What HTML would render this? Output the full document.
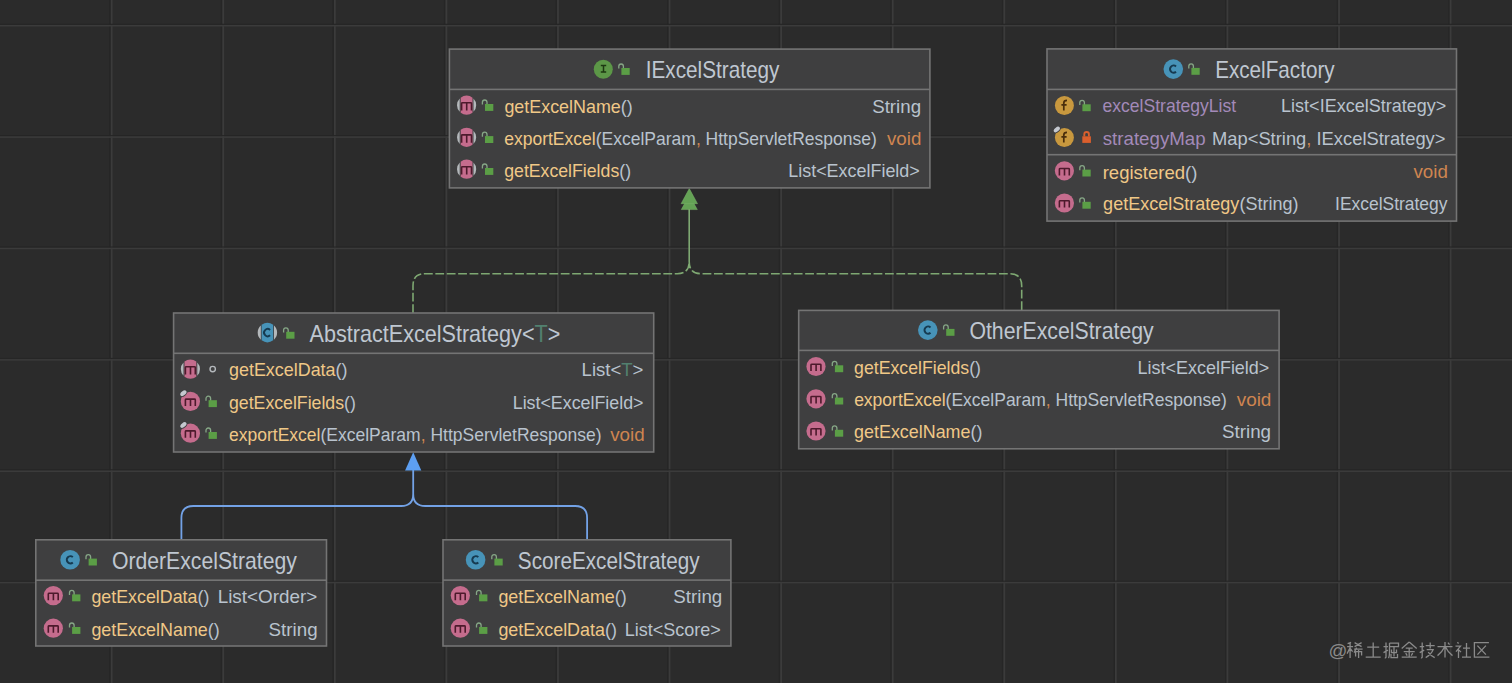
<!DOCTYPE html>
<html><head><meta charset="utf-8"><title>UML diagram</title>
<style>html,body{margin:0;padding:0;background:#2b2b2b;width:1512px;height:683px;overflow:hidden}</style>
</head><body>
<svg width="1512" height="683" viewBox="0 0 1512 683" style="display:block;font-family:'Liberation Sans', sans-serif">
<rect width="1512" height="683" fill="#2b2b2b"/>
<rect x="109.25" y="0" width="1.5" height="683" fill="#262626"/>
<rect x="110.75" y="0" width="1.8" height="683" fill="#3b3b3b"/>
<rect x="220.83" y="0" width="1.5" height="683" fill="#262626"/>
<rect x="222.33" y="0" width="1.8" height="683" fill="#3b3b3b"/>
<rect x="332.41" y="0" width="1.5" height="683" fill="#262626"/>
<rect x="333.91" y="0" width="1.8" height="683" fill="#3b3b3b"/>
<rect x="443.99" y="0" width="1.5" height="683" fill="#262626"/>
<rect x="445.49" y="0" width="1.8" height="683" fill="#3b3b3b"/>
<rect x="555.57" y="0" width="1.5" height="683" fill="#262626"/>
<rect x="557.07" y="0" width="1.8" height="683" fill="#3b3b3b"/>
<rect x="667.15" y="0" width="1.5" height="683" fill="#262626"/>
<rect x="668.65" y="0" width="1.8" height="683" fill="#3b3b3b"/>
<rect x="778.73" y="0" width="1.5" height="683" fill="#262626"/>
<rect x="780.23" y="0" width="1.8" height="683" fill="#3b3b3b"/>
<rect x="890.31" y="0" width="1.5" height="683" fill="#262626"/>
<rect x="891.81" y="0" width="1.8" height="683" fill="#3b3b3b"/>
<rect x="1001.89" y="0" width="1.5" height="683" fill="#262626"/>
<rect x="1003.39" y="0" width="1.8" height="683" fill="#3b3b3b"/>
<rect x="1113.47" y="0" width="1.5" height="683" fill="#262626"/>
<rect x="1114.97" y="0" width="1.8" height="683" fill="#3b3b3b"/>
<rect x="1225.05" y="0" width="1.5" height="683" fill="#262626"/>
<rect x="1226.55" y="0" width="1.8" height="683" fill="#3b3b3b"/>
<rect x="1336.63" y="0" width="1.5" height="683" fill="#262626"/>
<rect x="1338.13" y="0" width="1.8" height="683" fill="#3b3b3b"/>
<rect x="1448.21" y="0" width="1.5" height="683" fill="#262626"/>
<rect x="1449.71" y="0" width="1.8" height="683" fill="#3b3b3b"/>
<rect x="0" y="23.73" width="1512" height="1.2" fill="#262626"/>
<rect x="0" y="24.98" width="1512" height="1.5" fill="#3b3b3b"/>
<rect x="0" y="135.11" width="1512" height="1.2" fill="#262626"/>
<rect x="0" y="136.36" width="1512" height="1.5" fill="#3b3b3b"/>
<rect x="0" y="246.49" width="1512" height="1.2" fill="#262626"/>
<rect x="0" y="247.74" width="1512" height="1.5" fill="#3b3b3b"/>
<rect x="0" y="357.87" width="1512" height="1.2" fill="#262626"/>
<rect x="0" y="359.12" width="1512" height="1.5" fill="#3b3b3b"/>
<rect x="0" y="469.25" width="1512" height="1.2" fill="#262626"/>
<rect x="0" y="470.5" width="1512" height="1.5" fill="#3b3b3b"/>
<rect x="0" y="580.63" width="1512" height="1.2" fill="#262626"/>
<rect x="0" y="581.88" width="1512" height="1.5" fill="#3b3b3b"/>
<path d="M413 313 V285.7 Q413 273.7 425 273.7 H677.2 Q689.2 273.7 689.2 261.7 V205 M1021.7 310 V285.7 Q1021.7 273.7 1009.7 273.7 H701.2 Q689.2 273.7 689.2 261.7 V205" stroke="#7ea872" stroke-width="1.6" fill="none" stroke-dasharray="8.8 2.6"/>
<path d="M689.3 195.2 L697.3 209.6 L681.3 209.6 Z" fill="#64a255" stroke="#7db56d" stroke-width="0.5"/>
<path d="M689.3 188.6 L697.5 203.7 L681.1 203.7 Z" fill="#64a255" stroke="#7db56d" stroke-width="0.5"/>
<path d="M181.4 540 V518 Q181.4 506 193.4 506 H401.2 Q413.2 506 413.2 494 V470 M587.1 540 V518 Q587.1 506 575.1 506 H425.2 Q413.2 506 413.2 494" stroke="#73a2e6" stroke-width="1.8" fill="none"/>
<path d="M413.2 452.3 L421.3 470.6 L405.1 470.6 Z" fill="#5d9ff2"/>
<rect x="449.4" y="49.1" width="480.5" height="138.8" fill="#3f3f40" stroke="#747474" stroke-width="1.6"/><rect x="449.4" y="88.6" width="480.5" height="1.6" fill="#747474"/>
<circle cx="603.3" cy="69.2" r="9.5" fill="#5c9747"/><path d="M600.8 65.6 H606.2 M603.5 65.6 V72 M600.8 72 H606.2" stroke="#1d3812" stroke-width="1.5" fill="none"/>
<path d="M618.8 68.6 V66.3 A2.3 2.3 0 0 1 623.4 66.3 V68.6" stroke="#86a786" stroke-width="1.3" fill="none"/><rect x="621.4" y="68" width="8.3" height="6.9" fill="#5b9e46"/>
<text x="645.78" y="78.2" font-size="23.8" text-anchor="start" textLength="133.6" lengthAdjust="spacingAndGlyphs"><tspan fill="#bfc7d1">IExcelStrategy</tspan></text>
<path d="M459.7 98.53 A9.6 9.6 0 0 0 459.7 111.87 Z M473.5 98.53 A9.6 9.6 0 0 1 473.5 111.87 Z" fill="#b4b8bb"/><path d="M460.7 97.63 A9.6 9.6 0 0 1 472.5 97.63 V112.77 A9.6 9.6 0 0 1 460.7 112.77 Z" fill="#c56c8d"/><path d="M461.6 110.6 V103.4 Q461.6 102.8 462.5 102.8 H470.6 Q471.5 102.8 471.5 103.4 V110.6 M466.7 102.8 V110.6" stroke="#4d1a2c" stroke-width="1.6" fill="none"/>
<path d="M482.4 104.6 V102.3 A2.3 2.3 0 0 1 487 102.3 V104.6" stroke="#86a786" stroke-width="1.3" fill="none"/><rect x="485" y="104" width="8.3" height="6.9" fill="#5b9e46"/>
<path d="M459.7 130.63 A9.6 9.6 0 0 0 459.7 143.97 Z M473.5 130.63 A9.6 9.6 0 0 1 473.5 143.97 Z" fill="#b4b8bb"/><path d="M460.7 129.73 A9.6 9.6 0 0 1 472.5 129.73 V144.87 A9.6 9.6 0 0 1 460.7 144.87 Z" fill="#c56c8d"/><path d="M461.6 142.7 V135.5 Q461.6 134.9 462.5 134.9 H470.6 Q471.5 134.9 471.5 135.5 V142.7 M466.7 134.9 V142.7" stroke="#4d1a2c" stroke-width="1.6" fill="none"/>
<path d="M482.4 136.7 V134.4 A2.3 2.3 0 0 1 487 134.4 V136.7" stroke="#86a786" stroke-width="1.3" fill="none"/><rect x="485" y="136.1" width="8.3" height="6.9" fill="#5b9e46"/>
<path d="M459.7 162.53 A9.6 9.6 0 0 0 459.7 175.87 Z M473.5 162.53 A9.6 9.6 0 0 1 473.5 175.87 Z" fill="#b4b8bb"/><path d="M460.7 161.63 A9.6 9.6 0 0 1 472.5 161.63 V176.77 A9.6 9.6 0 0 1 460.7 176.77 Z" fill="#c56c8d"/><path d="M461.6 174.6 V167.4 Q461.6 166.8 462.5 166.8 H470.6 Q471.5 166.8 471.5 167.4 V174.6 M466.7 166.8 V174.6" stroke="#4d1a2c" stroke-width="1.6" fill="none"/>
<path d="M482.4 168.6 V166.3 A2.3 2.3 0 0 1 487 166.3 V168.6" stroke="#86a786" stroke-width="1.3" fill="none"/><rect x="485" y="168" width="8.3" height="6.9" fill="#5b9e46"/>
<text x="504.41" y="112.6" font-size="18.2" text-anchor="start" textLength="128.3" lengthAdjust="spacingAndGlyphs"><tspan fill="#f0c887">getExcelName</tspan><tspan fill="#b9c3ce">(</tspan><tspan fill="#b9c3ce">)</tspan></text>
<text x="872.18" y="112.6" font-size="18.2" text-anchor="start" textLength="48.9" lengthAdjust="spacingAndGlyphs"><tspan fill="#b9c3ce">String</tspan></text>
<text x="504.23" y="145.1" font-size="18.2" text-anchor="start" textLength="372.6" lengthAdjust="spacingAndGlyphs"><tspan fill="#f0c887">exportExcel</tspan><tspan fill="#b9c3ce">(</tspan><tspan fill="#b9c3ce">ExcelParam</tspan><tspan fill="#cf8550">, </tspan><tspan fill="#b9c3ce">HttpServletResponse</tspan><tspan fill="#b9c3ce">)</tspan></text>
<text x="887" y="145.1" font-size="18.2" text-anchor="start" textLength="34.4" lengthAdjust="spacingAndGlyphs"><tspan fill="#cf8550">void</tspan></text>
<text x="504.22" y="177.1" font-size="18.2" text-anchor="start" textLength="126.8" lengthAdjust="spacingAndGlyphs"><tspan fill="#f0c887">getExcelFields</tspan><tspan fill="#b9c3ce">(</tspan><tspan fill="#b9c3ce">)</tspan></text>
<text x="788.22" y="177.1" font-size="18.2" text-anchor="start" textLength="131.6" lengthAdjust="spacingAndGlyphs"><tspan fill="#b9c3ce">List&lt;ExcelField&gt;</tspan></text>
<rect x="1047" y="48.9" width="409.5" height="172.2" fill="#3f3f40" stroke="#747474" stroke-width="1.6"/><rect x="1047" y="88.6" width="409.5" height="1.6" fill="#747474"/><rect x="1047" y="153.9" width="409.5" height="1.6" fill="#747474"/>
<circle cx="1173.3" cy="69.1" r="9.8" fill="#4793b8"/><path d="M1176.01 66.42 A3.6 3.6 0 1 0 1176.01 71.78" stroke="#163a50" stroke-width="2.0" fill="none"/>
<path d="M1188.8 68.5 V66.2 A2.3 2.3 0 0 1 1193.4 66.2 V68.5" stroke="#86a786" stroke-width="1.3" fill="none"/><rect x="1191.4" y="67.9" width="8.3" height="6.9" fill="#5b9e46"/>
<text x="1215.15" y="78.2" font-size="23.8" text-anchor="start" textLength="119.5" lengthAdjust="spacingAndGlyphs"><tspan fill="#bfc7d1">ExcelFactory</tspan></text>
<circle cx="1064.4" cy="105.5" r="9.5" fill="#c8983e"/><path d="M1063.8 110.5 V102.9 Q1063.8 100.3 1067 100.3 M1061.4 104.8 H1066.6" stroke="#4a2e0c" stroke-width="1.7" fill="none"/>
<path d="M1079.8 104.9 V102.6 A2.3 2.3 0 0 1 1084.4 102.6 V104.9" stroke="#86a786" stroke-width="1.3" fill="none"/><rect x="1082.4" y="104.3" width="8.3" height="6.9" fill="#5b9e46"/>
<text x="1102.53" y="112.2" font-size="18.2" text-anchor="start" textLength="133.6" lengthAdjust="spacingAndGlyphs"><tspan fill="#a38ab9">excelStrategyList</tspan></text>
<text x="1281.12" y="112.2" font-size="18.2" text-anchor="start" textLength="165.1" lengthAdjust="spacingAndGlyphs"><tspan fill="#b9c3ce">List&lt;IExcelStrategy&gt;</tspan></text>
<circle cx="1064.4" cy="137.5" r="9.5" fill="#c8983e"/><path d="M1063.8 142.5 V134.9 Q1063.8 132.3 1067 132.3 M1061.4 136.8 H1066.6" stroke="#4a2e0c" stroke-width="1.7" fill="none"/><ellipse cx="1056.8" cy="129.5" rx="4.4" ry="2.9" transform="rotate(-40 1056.8 129.5)" fill="#3f3f40"/><ellipse cx="1056.8" cy="129.5" rx="3.6" ry="2.1" transform="rotate(-40 1056.8 129.5)" fill="#c4c8cf"/>
<path d="M1084.3 136.5 V134.3 A2.3 2.3 0 0 1 1088.9 134.3 V136.5" stroke="#db5f2d" stroke-width="1.9" fill="none"/><rect x="1082.3" y="136.3" width="8.6" height="6.6" fill="#db5f2d"/>
<text x="1102.79" y="144.5" font-size="18.2" text-anchor="start" textLength="102.8" lengthAdjust="spacingAndGlyphs"><tspan fill="#a38ab9">strategyMap</tspan></text>
<text x="1211.99" y="144.5" font-size="18.2" text-anchor="start" textLength="233.5" lengthAdjust="spacingAndGlyphs"><tspan fill="#b9c3ce">Map&lt;String</tspan><tspan fill="#cf8550">, </tspan><tspan fill="#b9c3ce">IExcelStrategy&gt;</tspan></text>
<circle cx="1064.4" cy="170.8" r="9.6" fill="#c56c8d"/><path d="M1059.4 175.4 V169.1 Q1059.4 168.5 1060.3 168.5 H1068.4 Q1069.3 168.5 1069.3 169.1 V175.4 M1064.5 168.5 V175.4" stroke="#4d1a2c" stroke-width="1.6" fill="none"/>
<path d="M1079.8 170.2 V167.9 A2.3 2.3 0 0 1 1084.4 167.9 V170.2" stroke="#86a786" stroke-width="1.3" fill="none"/><rect x="1082.4" y="169.6" width="8.3" height="6.9" fill="#5b9e46"/>
<text x="1102.68" y="178.6" font-size="18.2" text-anchor="start" textLength="94.7" lengthAdjust="spacingAndGlyphs"><tspan fill="#f0c887">registered</tspan><tspan fill="#b9c3ce">(</tspan><tspan fill="#b9c3ce">)</tspan></text>
<text x="1413.5" y="178.4" font-size="18.2" text-anchor="start" textLength="34.4" lengthAdjust="spacingAndGlyphs"><tspan fill="#cf8550">void</tspan></text>
<circle cx="1064.4" cy="203" r="9.6" fill="#c56c8d"/><path d="M1059.4 207.6 V201.3 Q1059.4 200.7 1060.3 200.7 H1068.4 Q1069.3 200.7 1069.3 201.3 V207.6 M1064.5 200.7 V207.6" stroke="#4d1a2c" stroke-width="1.6" fill="none"/>
<path d="M1079.8 202.4 V200.1 A2.3 2.3 0 0 1 1084.4 200.1 V202.4" stroke="#86a786" stroke-width="1.3" fill="none"/><rect x="1082.4" y="201.8" width="8.3" height="6.9" fill="#5b9e46"/>
<text x="1103.11" y="210.4" font-size="18.2" text-anchor="start" textLength="195.4" lengthAdjust="spacingAndGlyphs"><tspan fill="#f0c887">getExcelStrategy</tspan><tspan fill="#b9c3ce">(</tspan><tspan fill="#b9c3ce">String</tspan><tspan fill="#b9c3ce">)</tspan></text>
<text x="1335.07" y="210.4" font-size="18.2" text-anchor="start" textLength="112.4" lengthAdjust="spacingAndGlyphs"><tspan fill="#b9c3ce">IExcelStrategy</tspan></text>
<rect x="173.6" y="313" width="480.1" height="139" fill="#3f3f40" stroke="#747474" stroke-width="1.6"/><rect x="173.6" y="352.5" width="480.1" height="1.6" fill="#747474"/>
<path d="M260.8 325.49 A9.7 9.7 0 0 0 260.8 339.71 Z M274 325.49 A9.7 9.7 0 0 1 274 339.71 Z" fill="#b4b8bb"/><path d="M261.6 324.83 A9.7 9.7 0 0 1 273.2 324.83 V340.37 A9.7 9.7 0 0 1 261.6 340.37 Z" fill="#4793b8"/><path d="M270.11 329.92 A3.6 3.6 0 1 0 270.11 335.28" stroke="#163a50" stroke-width="1.9" fill="none"/>
<path d="M283.6 332.4 V330.1 A2.3 2.3 0 0 1 288.2 330.1 V332.4" stroke="#86a786" stroke-width="1.3" fill="none"/><rect x="286.2" y="331.8" width="8.3" height="6.9" fill="#5b9e46"/>
<text x="309.61" y="341.8" font-size="23.8" text-anchor="start" textLength="250.7" lengthAdjust="spacingAndGlyphs"><tspan fill="#bfc7d1">AbstractExcelStrategy&lt;</tspan><tspan fill="#52806f">T</tspan><tspan fill="#bfc7d1">&gt;</tspan></text>
<path d="M183.5 362.43 A9.6 9.6 0 0 0 183.5 375.77 Z M197.3 362.43 A9.6 9.6 0 0 1 197.3 375.77 Z" fill="#b4b8bb"/><path d="M184.5 361.53 A9.6 9.6 0 0 1 196.3 361.53 V376.67 A9.6 9.6 0 0 1 184.5 376.67 Z" fill="#c56c8d"/><path d="M185.4 374.5 V367.3 Q185.4 366.7 186.3 366.7 H194.4 Q195.3 366.7 195.3 367.3 V374.5 M190.5 366.7 V374.5" stroke="#4d1a2c" stroke-width="1.6" fill="none"/>
<circle cx="212.7" cy="369.1" r="2.7" stroke="#b4b8bc" stroke-width="1.4" fill="none"/>
<text x="229.01" y="376.2" font-size="18.2" text-anchor="start" textLength="118.5" lengthAdjust="spacingAndGlyphs"><tspan fill="#f0c887">getExcelData</tspan><tspan fill="#b9c3ce">(</tspan><tspan fill="#b9c3ce">)</tspan></text>
<text x="581.57" y="376.2" font-size="18.2" text-anchor="start" textLength="61.9" lengthAdjust="spacingAndGlyphs"><tspan fill="#b9c3ce">List&lt;</tspan><tspan fill="#52806f">T</tspan><tspan fill="#b9c3ce">&gt;</tspan></text>
<circle cx="190.4" cy="401.4" r="9.6" fill="#c56c8d"/><path d="M185.4 406 V399.7 Q185.4 399.1 186.3 399.1 H194.4 Q195.3 399.1 195.3 399.7 V406 M190.5 399.1 V406" stroke="#4d1a2c" stroke-width="1.6" fill="none"/><ellipse cx="183.4" cy="393.2" rx="4.4" ry="2.9" transform="rotate(-40 183.4 393.2)" fill="#3f3f40"/><ellipse cx="183.4" cy="393.2" rx="3.6" ry="2.1" transform="rotate(-40 183.4 393.2)" fill="#c4c8cf"/>
<path d="M206 400.8 V398.5 A2.3 2.3 0 0 1 210.6 398.5 V400.8" stroke="#86a786" stroke-width="1.3" fill="none"/><rect x="208.6" y="400.2" width="8.3" height="6.9" fill="#5b9e46"/>
<text x="229.02" y="408.9" font-size="18.2" text-anchor="start" textLength="126.8" lengthAdjust="spacingAndGlyphs"><tspan fill="#f0c887">getExcelFields</tspan><tspan fill="#b9c3ce">(</tspan><tspan fill="#b9c3ce">)</tspan></text>
<text x="512.73" y="408.9" font-size="18.2" text-anchor="start" textLength="130.8" lengthAdjust="spacingAndGlyphs"><tspan fill="#b9c3ce">List&lt;ExcelField&gt;</tspan></text>
<circle cx="190.4" cy="433.2" r="9.6" fill="#c56c8d"/><path d="M185.4 437.8 V431.5 Q185.4 430.9 186.3 430.9 H194.4 Q195.3 430.9 195.3 431.5 V437.8 M190.5 430.9 V437.8" stroke="#4d1a2c" stroke-width="1.6" fill="none"/><ellipse cx="183.4" cy="425" rx="4.4" ry="2.9" transform="rotate(-40 183.4 425)" fill="#3f3f40"/><ellipse cx="183.4" cy="425" rx="3.6" ry="2.1" transform="rotate(-40 183.4 425)" fill="#c4c8cf"/>
<path d="M206 432.6 V430.3 A2.3 2.3 0 0 1 210.6 430.3 V432.6" stroke="#86a786" stroke-width="1.3" fill="none"/><rect x="208.6" y="432" width="8.3" height="6.9" fill="#5b9e46"/>
<text x="229.03" y="441" font-size="18.2" text-anchor="start" textLength="372.6" lengthAdjust="spacingAndGlyphs"><tspan fill="#f0c887">exportExcel</tspan><tspan fill="#b9c3ce">(</tspan><tspan fill="#b9c3ce">ExcelParam</tspan><tspan fill="#cf8550">, </tspan><tspan fill="#b9c3ce">HttpServletResponse</tspan><tspan fill="#b9c3ce">)</tspan></text>
<text x="610.2" y="441" font-size="18.2" text-anchor="start" textLength="34.5" lengthAdjust="spacingAndGlyphs"><tspan fill="#cf8550">void</tspan></text>
<rect x="798.7" y="310.4" width="480.4" height="138.4" fill="#3f3f40" stroke="#747474" stroke-width="1.6"/><rect x="798.7" y="349.6" width="480.4" height="1.6" fill="#747474"/>
<circle cx="927.8" cy="330.1" r="9.8" fill="#4793b8"/><path d="M930.51 327.42 A3.6 3.6 0 1 0 930.51 332.78" stroke="#163a50" stroke-width="2.0" fill="none"/>
<path d="M943.6 329.5 V327.2 A2.3 2.3 0 0 1 948.2 327.2 V329.5" stroke="#86a786" stroke-width="1.3" fill="none"/><rect x="946.2" y="328.9" width="8.3" height="6.9" fill="#5b9e46"/>
<text x="969.42" y="339" font-size="23.8" text-anchor="start" textLength="184.3" lengthAdjust="spacingAndGlyphs"><tspan fill="#bfc7d1">OtherExcelStrategy</tspan></text>
<circle cx="816" cy="366.5" r="9.6" fill="#c56c8d"/><path d="M811 371.1 V364.8 Q811 364.2 811.9 364.2 H820 Q820.9 364.2 820.9 364.8 V371.1 M816.1 364.2 V371.1" stroke="#4d1a2c" stroke-width="1.6" fill="none"/>
<path d="M832.3 365.9 V363.6 A2.3 2.3 0 0 1 836.9 363.6 V365.9" stroke="#86a786" stroke-width="1.3" fill="none"/><rect x="834.9" y="365.3" width="8.3" height="6.9" fill="#5b9e46"/>
<circle cx="816" cy="398.8" r="9.6" fill="#c56c8d"/><path d="M811 403.4 V397.1 Q811 396.5 811.9 396.5 H820 Q820.9 396.5 820.9 397.1 V403.4 M816.1 396.5 V403.4" stroke="#4d1a2c" stroke-width="1.6" fill="none"/>
<path d="M832.3 398.2 V395.9 A2.3 2.3 0 0 1 836.9 395.9 V398.2" stroke="#86a786" stroke-width="1.3" fill="none"/><rect x="834.9" y="397.6" width="8.3" height="6.9" fill="#5b9e46"/>
<circle cx="816" cy="431" r="9.6" fill="#c56c8d"/><path d="M811 435.6 V429.3 Q811 428.7 811.9 428.7 H820 Q820.9 428.7 820.9 429.3 V435.6 M816.1 428.7 V435.6" stroke="#4d1a2c" stroke-width="1.6" fill="none"/>
<path d="M832.3 430.4 V428.1 A2.3 2.3 0 0 1 836.9 428.1 V430.4" stroke="#86a786" stroke-width="1.3" fill="none"/><rect x="834.9" y="429.8" width="8.3" height="6.9" fill="#5b9e46"/>
<text x="854.12" y="374.1" font-size="18.2" text-anchor="start" textLength="126.8" lengthAdjust="spacingAndGlyphs"><tspan fill="#f0c887">getExcelFields</tspan><tspan fill="#b9c3ce">(</tspan><tspan fill="#b9c3ce">)</tspan></text>
<text x="1137.62" y="374.1" font-size="18.2" text-anchor="start" textLength="131.7" lengthAdjust="spacingAndGlyphs"><tspan fill="#b9c3ce">List&lt;ExcelField&gt;</tspan></text>
<text x="854.13" y="406.3" font-size="18.2" text-anchor="start" textLength="372.6" lengthAdjust="spacingAndGlyphs"><tspan fill="#f0c887">exportExcel</tspan><tspan fill="#b9c3ce">(</tspan><tspan fill="#b9c3ce">ExcelParam</tspan><tspan fill="#cf8550">, </tspan><tspan fill="#b9c3ce">HttpServletResponse</tspan><tspan fill="#b9c3ce">)</tspan></text>
<text x="1236.7" y="406.3" font-size="18.2" text-anchor="start" textLength="34.7" lengthAdjust="spacingAndGlyphs"><tspan fill="#cf8550">void</tspan></text>
<text x="854.11" y="438.1" font-size="18.2" text-anchor="start" textLength="128.3" lengthAdjust="spacingAndGlyphs"><tspan fill="#f0c887">getExcelName</tspan><tspan fill="#b9c3ce">(</tspan><tspan fill="#b9c3ce">)</tspan></text>
<text x="1221.97" y="438.1" font-size="18.2" text-anchor="start" textLength="49.1" lengthAdjust="spacingAndGlyphs"><tspan fill="#b9c3ce">String</tspan></text>
<rect x="35.8" y="539.8" width="290.7" height="106.2" fill="#3f3f40" stroke="#747474" stroke-width="1.6"/><rect x="35.8" y="579.4" width="290.7" height="1.6" fill="#747474"/>
<circle cx="70.1" cy="559.8" r="9.8" fill="#4793b8"/><path d="M72.81 557.12 A3.6 3.6 0 1 0 72.81 562.48" stroke="#163a50" stroke-width="2.0" fill="none"/>
<path d="M86 559.2 V556.9 A2.3 2.3 0 0 1 90.6 556.9 V559.2" stroke="#86a786" stroke-width="1.3" fill="none"/><rect x="88.6" y="558.6" width="8.3" height="6.9" fill="#5b9e46"/>
<text x="111.92" y="568.6" font-size="23.8" text-anchor="start" textLength="184.9" lengthAdjust="spacingAndGlyphs"><tspan fill="#bfc7d1">OrderExcelStrategy</tspan></text>
<circle cx="53.3" cy="595.6" r="9.6" fill="#c56c8d"/><path d="M48.3 600.2 V593.9 Q48.3 593.3 49.2 593.3 H57.3 Q58.2 593.3 58.2 593.9 V600.2 M53.4 593.3 V600.2" stroke="#4d1a2c" stroke-width="1.6" fill="none"/>
<path d="M69.5 595 V592.7 A2.3 2.3 0 0 1 74.1 592.7 V595" stroke="#86a786" stroke-width="1.3" fill="none"/><rect x="72.1" y="594.4" width="8.3" height="6.9" fill="#5b9e46"/>
<text x="91.42" y="603" font-size="18.2" text-anchor="start" textLength="117.9" lengthAdjust="spacingAndGlyphs"><tspan fill="#f0c887">getExcelData</tspan><tspan fill="#b9c3ce">(</tspan><tspan fill="#b9c3ce">)</tspan></text>
<text x="217.65" y="603" font-size="18.2" text-anchor="start" textLength="99.6" lengthAdjust="spacingAndGlyphs"><tspan fill="#b9c3ce">List&lt;Order&gt;</tspan></text>
<circle cx="53.3" cy="628.2" r="9.6" fill="#c56c8d"/><path d="M48.3 632.8 V626.5 Q48.3 625.9 49.2 625.9 H57.3 Q58.2 625.9 58.2 626.5 V632.8 M53.4 625.9 V632.8" stroke="#4d1a2c" stroke-width="1.6" fill="none"/>
<path d="M69.5 627.6 V625.3 A2.3 2.3 0 0 1 74.1 625.3 V627.6" stroke="#86a786" stroke-width="1.3" fill="none"/><rect x="72.1" y="627" width="8.3" height="6.9" fill="#5b9e46"/>
<text x="91.41" y="635.5" font-size="18.2" text-anchor="start" textLength="128.3" lengthAdjust="spacingAndGlyphs"><tspan fill="#f0c887">getExcelName</tspan><tspan fill="#b9c3ce">(</tspan><tspan fill="#b9c3ce">)</tspan></text>
<text x="268.58" y="635.5" font-size="18.2" text-anchor="start" textLength="49.0" lengthAdjust="spacingAndGlyphs"><tspan fill="#b9c3ce">String</tspan></text>
<rect x="443" y="539.8" width="287.9" height="106.2" fill="#3f3f40" stroke="#747474" stroke-width="1.6"/><rect x="443" y="579.3" width="287.9" height="1.6" fill="#747474"/>
<circle cx="475.6" cy="559.8" r="9.8" fill="#4793b8"/><path d="M478.31 557.12 A3.6 3.6 0 1 0 478.31 562.48" stroke="#163a50" stroke-width="2.0" fill="none"/>
<path d="M491.8 559.2 V556.9 A2.3 2.3 0 0 1 496.4 556.9 V559.2" stroke="#86a786" stroke-width="1.3" fill="none"/><rect x="494.4" y="558.6" width="8.3" height="6.9" fill="#5b9e46"/>
<text x="517.84" y="568.6" font-size="23.8" text-anchor="start" textLength="181.8" lengthAdjust="spacingAndGlyphs"><tspan fill="#bfc7d1">ScoreExcelStrategy</tspan></text>
<circle cx="460.3" cy="595.6" r="9.6" fill="#c56c8d"/><path d="M455.3 600.2 V593.9 Q455.3 593.3 456.2 593.3 H464.3 Q465.2 593.3 465.2 593.9 V600.2 M460.4 593.3 V600.2" stroke="#4d1a2c" stroke-width="1.6" fill="none"/>
<path d="M476.5 595 V592.7 A2.3 2.3 0 0 1 481.1 592.7 V595" stroke="#86a786" stroke-width="1.3" fill="none"/><rect x="479.1" y="594.4" width="8.3" height="6.9" fill="#5b9e46"/>
<text x="498.41" y="603" font-size="18.2" text-anchor="start" textLength="128.3" lengthAdjust="spacingAndGlyphs"><tspan fill="#f0c887">getExcelName</tspan><tspan fill="#b9c3ce">(</tspan><tspan fill="#b9c3ce">)</tspan></text>
<text x="673.28" y="603" font-size="18.2" text-anchor="start" textLength="49.0" lengthAdjust="spacingAndGlyphs"><tspan fill="#b9c3ce">String</tspan></text>
<circle cx="460.3" cy="628.2" r="9.6" fill="#c56c8d"/><path d="M455.3 632.8 V626.5 Q455.3 625.9 456.2 625.9 H464.3 Q465.2 625.9 465.2 626.5 V632.8 M460.4 625.9 V632.8" stroke="#4d1a2c" stroke-width="1.6" fill="none"/>
<path d="M476.5 627.6 V625.3 A2.3 2.3 0 0 1 481.1 625.3 V627.6" stroke="#86a786" stroke-width="1.3" fill="none"/><rect x="479.1" y="627" width="8.3" height="6.9" fill="#5b9e46"/>
<text x="498.41" y="635.5" font-size="18.2" text-anchor="start" textLength="118.5" lengthAdjust="spacingAndGlyphs"><tspan fill="#f0c887">getExcelData</tspan><tspan fill="#b9c3ce">(</tspan><tspan fill="#b9c3ce">)</tspan></text>
<text x="624.71" y="635.5" font-size="18.2" text-anchor="start" textLength="96.2" lengthAdjust="spacingAndGlyphs"><tspan fill="#b9c3ce">List&lt;Score&gt;</tspan></text>
<path transform="translate(1346.6 641.6)" d="M4.5 0.8 L1 2 M0.5 5 H6.5 M3.5 1.5 V16.5 M3.5 6 L0.5 12 M3.8 7 L6 10 M8 1 L15 5 M15 1 L8 5 M7.5 7.5 H16 M10 6 L7.5 11 M9 10 V15 M9 10 H15 V14 M12 8.5 V16.5" stroke="#8a8a8a" stroke-width="1.3" fill="none"/>
<path transform="translate(1365.2 641.6)" d="M2 5.5 H14 M8 1 V15.5 M0.5 15.5 H15.5" stroke="#8a8a8a" stroke-width="1.3" fill="none"/>
<path transform="translate(1383.0 641.6)" d="M0.5 5 H5 M3 0.8 V15.5 Q3 16.5 1.8 16 M0.5 11 L5 8.5 M6.5 1.5 H15.5 V5 H6.5 M6.5 1.5 V10 Q6.5 15 5.5 16.5 M11 5.5 V15 M8.5 8 V11 H13.5 V8 M8 12.5 V16 H14.5 V12.5" stroke="#8a8a8a" stroke-width="1.3" fill="none"/>
<path transform="translate(1401.2 641.6)" d="M8 0.5 L0.5 7 M8 0.5 L15.5 7 M4.5 6.5 H11.5 M2.5 10 H13.5 M8 6.5 V15.5 M4.5 11.5 L6 14 M11.5 11.5 L10 14 M0.5 15.5 H15.5" stroke="#8a8a8a" stroke-width="1.3" fill="none"/>
<path transform="translate(1419.2 641.6)" d="M0.5 5 H5 M3 0.8 V15.5 Q3 16.5 1.8 16 M0.5 11 L5 8.5 M6.5 4 H15.5 M11 0.8 V7 M7.5 8 H14 Q12 13 6.5 16 M9 10.5 Q11.5 14 15.5 16" stroke="#8a8a8a" stroke-width="1.3" fill="none"/>
<path transform="translate(1437.0 641.6)" d="M0.5 5 H15.5 M8 0.5 V16 M7.5 5.5 Q5 11 0.5 14 M8.5 5.5 Q11 11 15.5 14 M11 1 L12.5 3" stroke="#8a8a8a" stroke-width="1.3" fill="none"/>
<path transform="translate(1455.0 641.6)" d="M2.5 0.5 L3.5 2 M0.5 4.5 H5.5 L1 10 M3.5 7 V16.5 M4 8.5 L6 10.5 M8 6.5 H15 M11.5 1.5 V15.5 M7 15.5 H16" stroke="#8a8a8a" stroke-width="1.3" fill="none"/>
<path transform="translate(1473.4 641.6)" d="M15.5 1 H1 V15.5 H16 M4 4 L12.5 13 M12.5 4 L4 13" stroke="#8a8a8a" stroke-width="1.3" fill="none"/>
<text x="1328.6" y="657.2" font-size="18.6" fill="#8a8a8a">@</text>
</svg>
</body></html>
